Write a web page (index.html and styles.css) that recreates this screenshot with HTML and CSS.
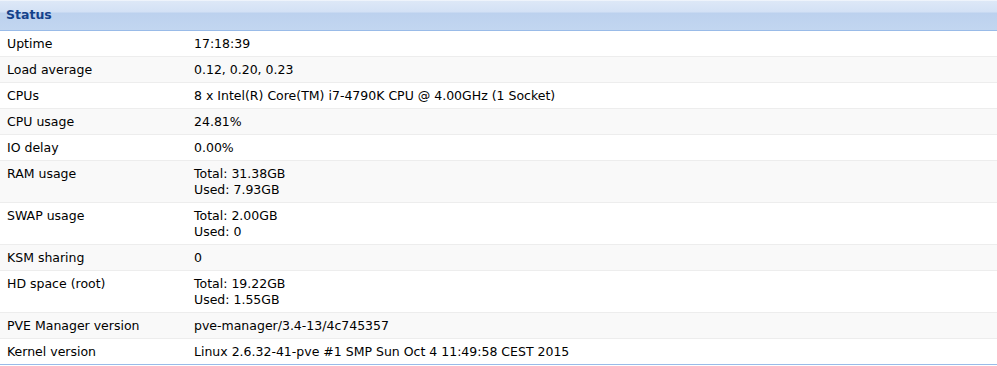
FILE: index.html
```html
<!DOCTYPE html>
<html lang="en">

<head>
    <meta charset="UTF-8">
    <title>Status</title>
    <link rel="stylesheet" href="styles.css">
</head>

<body>
    <div class="panel">
        <div class="panel-header">Status</div>
        <table class="grid">
            <tr><td class="key">Uptime</td><td>17:18:39</td></tr>
            <tr><td class="key">Load average</td><td>0.12, 0.20, 0.23</td></tr>
            <tr><td class="key">CPUs</td><td>8 x Intel(R) Core(TM) i7-4790K CPU @ 4.00GHz (1 Socket)</td></tr>
            <tr><td class="key">CPU usage</td><td>24.81%</td></tr>
            <tr><td class="key">IO delay</td><td>0.00%</td></tr>
            <tr><td class="key">RAM usage</td><td>Total: 31.38GB<br>Used: 7.93GB</td></tr>
            <tr><td class="key">SWAP usage</td><td>Total: 2.00GB<br>Used: 0</td></tr>
            <tr><td class="key">KSM sharing</td><td>0</td></tr>
            <tr><td class="key">HD space (root)</td><td>Total: 19.22GB<br>Used: 1.55GB</td></tr>
            <tr><td class="key">PVE Manager version</td><td>pve-manager/3.4-13/4c745357</td></tr>
            <tr><td class="key">Kernel version</td><td>Linux 2.6.32-41-pve #1 SMP Sun Oct 4 11:49:58 CEST 2015</td></tr>
        </table>
    </div>
</body>

</html>
```

FILE: styles.css
```css
body {
    margin: 0;
    background-color: white;
    font-family: 'DejaVu Sans', Tahoma, sans-serif;
    font-size: 12.5px;
    color: black;
}

.panel {
    border-bottom: 1px solid #99bbe8;
}

.panel-header {
    height: 31px;
    box-sizing: border-box;
    padding: 7px 6px 0;
    border-bottom: 1px solid #99bbe8;
    background: linear-gradient(to bottom, #ffffff 0, #dde8f7 1px, #d3e1f5 12px, #bcd1ee 13px, #c2d6f0 30px);
    color: #15428b;
    font-weight: bold;
    font-size: 12.5px;
    line-height: 16px;
}

.grid {
    width: 100%;
    border-collapse: collapse;
}

.grid td {
    padding: 5px 7px 4px;
    line-height: 16px;
    vertical-align: top;
    border-bottom: 1px solid #ededed;
}

.grid tr:nth-child(even) td {
    background-color: #f9f9f9;
}

.grid tr:last-child td {
    border-bottom: none;
}

.key {
    width: 173px;
}
```
